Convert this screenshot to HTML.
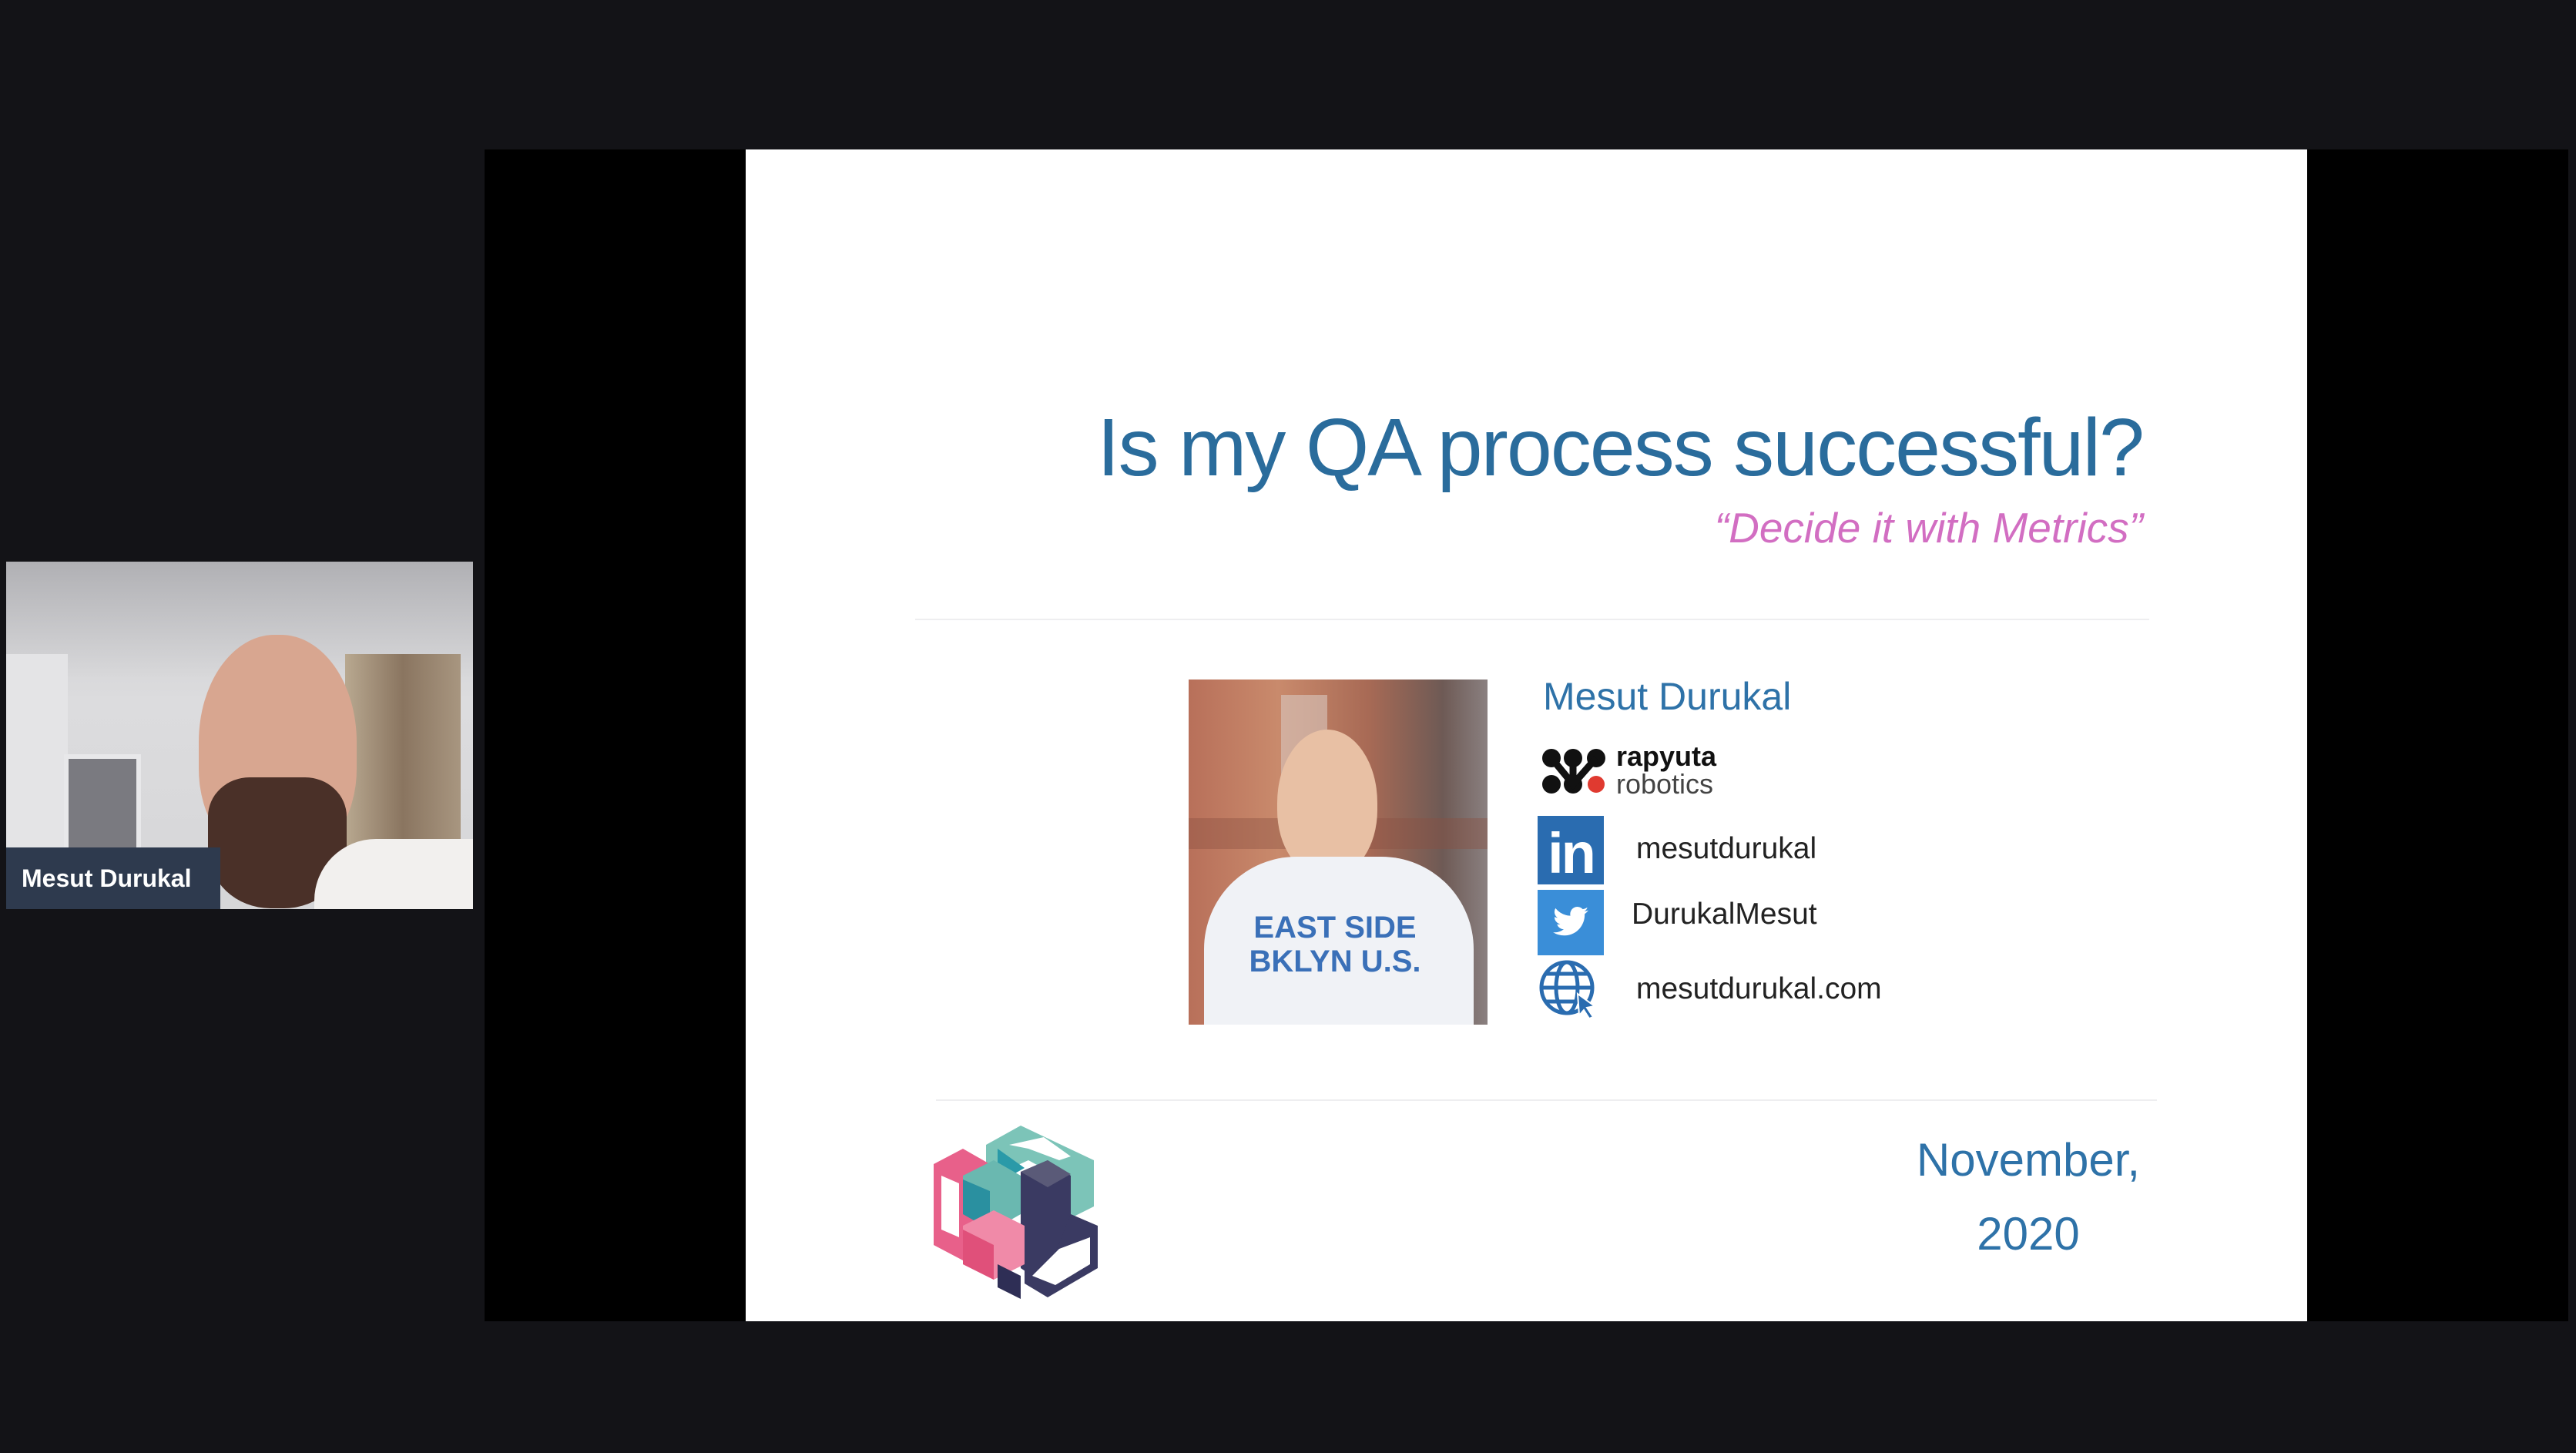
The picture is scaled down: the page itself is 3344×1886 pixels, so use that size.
<!DOCTYPE html>
<html><head><meta charset="utf-8">
<style>
*{margin:0;padding:0;box-sizing:border-box}
html,body{width:3344px;height:1886px;overflow:hidden;background:#131317;font-family:"Liberation Sans",sans-serif}
.abs{position:absolute}
.blue{color:#2a6c9c}
</style></head><body>
<div class="abs" style="left:629px;top:194px;width:2705px;height:1521px;background:#000"></div>
<div class="abs" style="left:968px;top:194px;width:2027px;height:1521px;background:#fff"></div>

<div class="abs blue" style="left:1200px;width:1582px;top:516px;text-align:right;font-size:106px;letter-spacing:-2px;line-height:130px;white-space:nowrap">Is my QA process successful?</div>
<div class="abs" style="left:1800px;width:982px;top:650px;text-align:right;font-size:55px;font-style:italic;letter-spacing:0px;color:#d26ec2;line-height:70px;white-space:nowrap">“Decide it with Metrics”</div>
<div class="abs" style="left:1188px;top:803px;width:1602px;height:2px;background:#eeeef0"></div>
<div class="abs" style="left:1215px;top:1427px;width:1585px;height:2px;background:#eeeef0"></div>

<div class="abs" style="left:1543px;top:882px;width:388px;height:448px;overflow:hidden;background:linear-gradient(90deg,#b8705a 0%,#c98a6c 30%,#a86a55 60%,#6e5a55 85%,#8a8080 100%)">
  <div class="abs" style="left:120px;top:20px;width:60px;height:120px;background:#d8c8c0;opacity:.6"></div>
  <div class="abs" style="left:0;top:180px;width:388px;height:40px;background:#8a5040;opacity:.4"></div>
  <div class="abs" style="left:115px;top:65px;width:130px;height:190px;border-radius:50% 50% 45% 45%;background:#e8c0a4"></div>
  <div class="abs" style="left:20px;top:230px;width:350px;height:260px;border-radius:120px 120px 0 0;background:#f0f2f6"></div>
  <div class="abs" style="left:50px;top:300px;width:280px;text-align:center;color:#3a70b8;font-weight:bold;font-size:40px;line-height:44px;letter-spacing:0px">EAST SIDE<br>BKLYN U.S.</div>
</div>

<div class="abs" style="left:2003px;top:874px;font-size:50px;line-height:60px;color:#2e72a8">Mesut Durukal</div>
<svg class="abs" style="left:2000px;top:970px" width="90" height="66" viewBox="0 0 90 66">
  <circle cx="14" cy="14" r="12" fill="#111"/><circle cx="42" cy="14" r="12" fill="#111"/><circle cx="72" cy="14" r="12" fill="#111"/>
  <circle cx="14" cy="48" r="12" fill="#111"/><circle cx="42" cy="48" r="12" fill="#111"/><circle cx="72" cy="48" r="11" fill="#e03a30"/>
  <path d="M14 14 L42 48 L72 14 M42 14 L42 48" stroke="#111" stroke-width="9" fill="none"/>
</svg>
<div class="abs" style="left:2098px;top:964px;font-size:36px;font-weight:bold;line-height:36px;color:#111">rapyuta</div>
<div class="abs" style="left:2098px;top:1000px;font-size:36px;line-height:36px;color:#444">robotics</div>
<div class="abs" style="left:1996px;top:1059px;width:86px;height:89px;background:#2a6cb0;color:#fff;font-weight:bold;font-size:74px;line-height:98px;text-align:center;letter-spacing:-3px">in</div>
<div class="abs" style="left:1996px;top:1155px;width:86px;height:85px;background:#3a8ed8"></div>
<svg class="abs" style="left:2012px;top:1172px" width="54" height="50" viewBox="0 0 24 24"><path fill="#fff" d="M23 4.6a9 9 0 0 1-2.6.7 4.5 4.5 0 0 0 2-2.5 9 9 0 0 1-2.9 1.1A4.5 4.5 0 0 0 11.8 8 12.8 12.8 0 0 1 2.5 3.3a4.5 4.5 0 0 0 1.4 6 4.5 4.5 0 0 1-2-.6 4.5 4.5 0 0 0 3.6 4.5 4.5 4.5 0 0 1-2 .1 4.5 4.5 0 0 0 4.2 3.1A9 9 0 0 1 1 18.3a12.8 12.8 0 0 0 6.9 2c8.3 0 12.8-6.9 12.8-12.8v-.6A9 9 0 0 0 23 4.6z"/></svg>
<svg class="abs" style="left:1996px;top:1244px" width="88" height="80" viewBox="0 0 88 80">
  <g stroke="#2a6cb0" stroke-width="5" fill="none">
    <circle cx="38" cy="38" r="33"/><ellipse cx="38" cy="38" rx="14" ry="33"/>
    <line x1="5" y1="38" x2="71" y2="38"/><path d="M10 20 H66 M10 56 H66"/>
  </g>
  <path d="M52 46 L74 62 L64 64 L72 76 L67 78 L60 67 L54 74 Z" fill="#2a6cb0" stroke="#fff" stroke-width="2"/>
</svg>
<div class="abs" style="left:2124px;top:1078px;font-size:39px;line-height:48px;color:#222">mesutdurukal</div>
<div class="abs" style="left:2118px;top:1163px;font-size:39px;line-height:48px;color:#222">DurukalMesut</div>
<div class="abs" style="left:2124px;top:1260px;font-size:39px;line-height:48px;color:#222">mesutdurukal.com</div>

<div class="abs" style="left:2430px;width:406px;top:1470px;text-align:center;font-size:60px;line-height:72px;color:#2e72a8">November,</div>
<div class="abs" style="left:2430px;width:406px;top:1566px;text-align:center;font-size:60px;line-height:72px;color:#2e72a8">2020</div>

<svg class="abs" style="left:1210px;top:1446px" width="220" height="244" viewBox="0 0 220 244">
  <polygon points="70,40 115,15 210,60 210,120 180,135 180,90 125,60 70,85" fill="#7cc4b8"/>
  <polygon points="100,40 145,30 180,55 165,60 125,45" fill="#fff"/>
  <polygon points="85,45 120,70 85,90" fill="#2a9aa8"/>
  <polygon points="2,65 40,45 75,65 75,170 40,190 2,170" fill="#e8608a"/>
  <polygon points="12,80 35,90 35,160 12,150" fill="#fff"/>
  <polygon points="40,80 80,60 115,80 115,130 80,150 40,130" fill="#6ab8b0"/>
  <polygon points="40,85 75,100 75,150 40,130" fill="#2a90a0"/>
  <polygon points="115,75 150,60 180,80 180,200 145,220 115,200" fill="#3a3a62"/>
  <polygon points="115,75 150,60 180,78 150,95" fill="#5a5a78"/>
  <polygon points="180,130 215,145 215,200 150,238 120,220 120,200 160,180" fill="#3a3a62"/>
  <polygon points="165,175 205,160 205,195 160,222 130,210" fill="#fff"/>
  <polygon points="40,145 80,125 120,145 120,195 80,215 40,195" fill="#f08aa8"/>
  <polygon points="40,150 80,170 80,215 40,195" fill="#e0507a"/>
  <polygon points="85,195 115,210 115,240 85,225" fill="#2e2e55"/>
</svg>

<div class="abs" style="left:8px;top:729px;width:606px;height:451px;overflow:hidden;background:linear-gradient(180deg,#c8c8cc 0%,#dcdcde 40%,#d6d6d8 100%)">
  <div class="abs" style="left:0;top:0;width:606px;height:150px;background:linear-gradient(180deg,#b0b0b4,#d8d8da)"></div>
  <div class="abs" style="left:0;top:120px;width:80px;height:260px;background:#e4e4e6"></div>
  <div class="abs" style="left:75px;top:250px;width:100px;height:135px;background:#7a7a80;border:6px solid #e8e8ea"></div>
  <div class="abs" style="left:440px;top:120px;width:150px;height:340px;background:linear-gradient(90deg,#b8a890,#8a7560,#a89680)"></div>
  <div class="abs" style="left:250px;top:95px;width:205px;height:290px;border-radius:48% 48% 40% 40%;background:#d8a690"></div>
  <div class="abs" style="left:262px;top:280px;width:180px;height:170px;border-radius:30% 30% 45% 45%;background:#4a3028"></div>
  <div class="abs" style="left:400px;top:360px;width:210px;height:120px;border-radius:80px 0 0 0;background:#f2f0ee"></div>
  <div class="abs" style="left:0;top:371px;width:278px;height:80px;background:#2e3a4e;color:#fff;font-weight:bold;font-size:32px;line-height:80px;padding-left:20px">Mesut Durukal</div>
</div>
</body></html>
